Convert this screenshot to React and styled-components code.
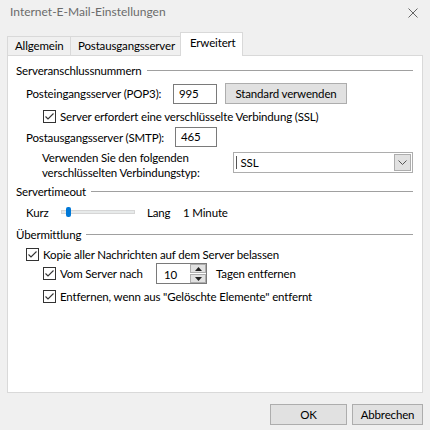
import React from 'react';
import styled, { createGlobalStyle } from 'styled-components';

/* ===== COLORS ===== */
const WINDOW_BG = '#F0F0F0';
const WHITE = '#FFFFFF';
const TEXT = '#000000';
const TITLE_TEXT = '#6B6B6B';
const BORDER = '#D9D9D9';
const INPUT_BORDER = '#7A7A7A';
const BUTTON_BG = '#E1E1E1';
const BUTTON_BORDER = '#ADADAD';
const GROUP_LINE = '#A0A0A0';
const ACCENT = '#0078D7';

const GlobalStyle = createGlobalStyle`
  html, body {
    margin: 0;
    padding: 0;
    background: ${WINDOW_BG};
  }
  * { box-sizing: border-box; }
`;

/* ===== WINDOW ===== */

const Window = styled.div`
  width: 430px;
  height: 430px;
  background: ${WINDOW_BG};
  font-family: 'Segoe UI', Lato, 'Noto Sans', sans-serif;
  font-size: 11.5px;
  letter-spacing: -0.15px;
  color: ${TEXT};
  display: flex;
  flex-direction: column;
  overflow: hidden;
`;

const TitleBar = styled.div`
  height: 33px;
  display: flex;
  align-items: flex-start;
  justify-content: space-between;
  padding: 4px 12px 0 10px;
`;

const Title = styled.span`
  font-size: 12px;
  letter-spacing: 0;
  color: ${TITLE_TEXT};
`;

const CloseIcon = styled.svg`
  margin-top: 4px;
`;

/* ===== TABS ===== */

const TabStrip = styled.div`
  display: flex;
  align-items: flex-end;
  height: 23px;
  padding-left: 7px;
  position: relative;
  z-index: 1;
`;

const Tab = styled.div`
  height: ${(p) => (p.$active ? '24px' : '20px')};
  width: ${(p) => p.$w}px;
  margin: ${(p) => (p.$active ? '0 -2px' : '0')};
  padding-left: ${(p) => (p.$active ? '9px' : '7px')};
  padding-top: ${(p) => (p.$active ? '3px' : '2px')};
  background: ${(p) => (p.$active ? WHITE : WINDOW_BG)};
  border: 1px solid ${BORDER};
  border-bottom: ${(p) => (p.$active ? 'none' : `1px solid ${BORDER}`)};
  border-right: ${(p) => (p.$last || p.$active ? `1px solid ${BORDER}` : 'none')};
  white-space: nowrap;
`;

const Panel = styled.div`
  margin: -1px 7px 0 7px;
  height: 338px;
  background: ${WHITE};
  border: 1px solid ${BORDER};
  padding: 6px 9px 0 8px;
  display: flex;
  flex-direction: column;
`;

/* ===== GROUPS ===== */

const GroupHeader = styled.div`
  height: 16px;
  margin-top: ${(p) => p.$mt || 0}px;
  display: flex;
  align-items: center;
  gap: 5px;
  &::after {
    content: '';
    flex: 1;
    border-top: 1px solid ${GROUP_LINE};
  }
`;

const Row = styled.div`
  display: flex;
  align-items: ${(p) => p.$align || 'center'};
  height: ${(p) => p.$h || 20}px;
  margin-top: ${(p) => p.$mt || 0}px;
  padding-left: ${(p) => p.$indent || 0}px;
  white-space: nowrap;
`;

const Label = styled.span`
  width: ${(p) => (p.$w ? `${p.$w}px` : 'auto')};
  margin-left: ${(p) => p.$ml || 0}px;
  flex-shrink: 0;
`;

const TextInput = styled.div`
  width: ${(p) => p.$w}px;
  height: 20px;
  border: 1px solid ${INPUT_BORDER};
  background: ${WHITE};
  padding: 2px 0 0 5px;
  margin-left: ${(p) => p.$ml || 0}px;
`;

const Button = styled.div`
  height: ${(p) => p.$h || 21}px;
  width: ${(p) => p.$w}px;
  margin-left: ${(p) => p.$ml || 0}px;
  background: ${BUTTON_BG};
  border: 1px solid ${BUTTON_BORDER};
  display: flex;
  align-items: center;
  justify-content: center;
`;

const TwoLineLabel = styled.div`
  width: 192px;
  margin-left: 26px;
  line-height: 15px;
  white-space: normal;
`;

const Select = styled.div`
  width: 180px;
  height: 21px;
  margin-top: 2px;
  border: 1px solid ${BUTTON_BORDER};
  background: ${WHITE};
  display: flex;
  align-items: center;
`;

const SelectValue = styled.span`
  flex: 1;
  padding-left: 3px;
  border-left: 1px solid #555;
  margin-left: 2px;
  line-height: 13px;
`;

const SelectArrow = styled.div`
  width: 17px;
  height: 17px;
  margin-right: 1px;
  background: ${BUTTON_BG};
  border: 1px solid ${BUTTON_BORDER};
  display: flex;
  align-items: center;
  justify-content: center;
`;

/* ===== CHECKBOX ===== */

const CheckBox = styled.div`
  width: 13px;
  height: 13px;
  border: 1px solid #333333;
  background: ${WHITE};
  margin-right: 4px;
  display: flex;
  align-items: center;
  justify-content: center;
  flex-shrink: 0;
`;

const Checked = () => (
  <CheckBox>
    <svg width="11" height="11" viewBox="0 0 11 11">
      <polyline points="1.5,5.5 4,8 9.5,2.5" fill="none" stroke="#333" strokeWidth="1.1" />
    </svg>
  </CheckBox>
);

/* ===== SLIDER ===== */

const SliderTrack = styled.div`
  position: relative;
  width: 74px;
  height: 4px;
  margin-left: 10px;
  background: #E7EAEA;
  border: 1px solid #D6D6D6;
`;

const SliderThumb = styled.div`
  position: absolute;
  left: 4px;
  top: -4px;
  width: 5px;
  height: 10px;
  border-radius: 2px;
  background: ${ACCENT};
`;

/* ===== SPINNER ===== */

const Spinner = styled.div`
  width: 51px;
  height: 21px;
  border: 1px solid ${INPUT_BORDER};
  background: ${WHITE};
  display: flex;
  align-items: center;
`;

const SpinValue = styled.span`
  flex: 1;
  padding: 2px 0 0 7px;
`;

const SpinButtons = styled.div`
  width: 16px;
  height: 19px;
  display: flex;
  flex-direction: column;
  gap: 1px;
`;

const SpinButton = styled.div`
  flex: 1;
  background: ${BUTTON_BG};
  border: 1px solid ${BUTTON_BORDER};
  display: flex;
  align-items: center;
  justify-content: center;
`;

/* ===== FOOTER ===== */

const Footer = styled.div`
  display: flex;
  justify-content: flex-end;
  gap: 5px;
  padding: 11px 7px 0 0;
`;

const App = () => {
  return (
    <>
      <GlobalStyle />
      <Window>
        <TitleBar>
          <Title>Internet-E-Mail-Einstellungen</Title>
          <CloseIcon width="10" height="10" viewBox="0 0 10 10">
            <path d="M0.5 0.5 L9.5 9.5 M9.5 0.5 L0.5 9.5" stroke="#555" strokeWidth="0.9" />
          </CloseIcon>
        </TitleBar>

        <TabStrip>
          <Tab $w={63}>Allgemein</Tab>
          <Tab $w={112} $last>Postausgangsserver</Tab>
          <Tab $w={63} $active>Erweitert</Tab>
        </TabStrip>

        <Panel>
          <GroupHeader>Serveranschlussnummern</GroupHeader>
          <Row $h={21} $mt={5} $indent={10}>
            <Label $w={147}>Posteingangsserver (POP3):</Label>
            <TextInput $w={44}>995</TextInput>
            <Button $w={122} $ml={8}>Standard verwenden</Button>
          </Row>
          <Row $mt={2} $indent={27}>
            <Checked />
            <Label>Server erfordert eine verschlüsselte Verbindung (SSL)</Label>
          </Row>
          <Row $mt={1} $indent={10}>
            <Label $w={149}>Postausgangsserver (SMTP):</Label>
            <TextInput $w={42}>465</TextInput>
          </Row>
          <Row $h={30} $mt={3} $align="flex-start">
            <TwoLineLabel>
              Verwenden Sie den folgenden verschlüsselten Verbindungstyp:
            </TwoLineLabel>
            <Select>
              <SelectValue>SSL</SelectValue>
              <SelectArrow>
                <svg width="9" height="5" viewBox="0 0 9 5">
                  <polyline points="0.5,0.5 4.5,4.5 8.5,0.5" fill="none" stroke="#555" strokeWidth="1" />
                </svg>
              </SelectArrow>
            </Select>
          </Row>

          <GroupHeader $mt={3}>Servertimeout</GroupHeader>
          <Row $mt={3} $indent={10}>
            <Label $w={25}>Kurz</Label>
            <SliderTrack>
              <SliderThumb />
            </SliderTrack>
            <Label $w={36} $ml={12}>Lang</Label>
            <Label>1 Minute</Label>
          </Row>

          <GroupHeader $mt={4}>Übermittlung</GroupHeader>
          <Row $h={18} $mt={3} $indent={10}>
            <Checked />
            <Label>Kopie aller Nachrichten auf dem Server belassen</Label>
          </Row>
          <Row $h={21} $indent={27}>
            <Checked />
            <Label $w={96}>Vom Server nach</Label>
            <Spinner>
              <SpinValue>10</SpinValue>
              <SpinButtons>
                <SpinButton>
                  <svg width="7" height="4" viewBox="0 0 7 4"><polygon points="3.5,0 7,4 0,4" fill="#222" /></svg>
                </SpinButton>
                <SpinButton>
                  <svg width="7" height="4" viewBox="0 0 7 4"><polygon points="0,0 7,0 3.5,4" fill="#222" /></svg>
                </SpinButton>
              </SpinButtons>
            </Spinner>
            <Label $ml={9}>Tagen entfernen</Label>
          </Row>
          <Row $mt={2} $indent={27}>
            <Checked />
            <Label>Entfernen, wenn aus "Gelöschte Elemente" entfernt</Label>
          </Row>
        </Panel>

        <Footer>
          <Button $w={77} $h={21}>OK</Button>
          <Button $w={71} $h={21}>Abbrechen</Button>
        </Footer>
      </Window>
    </>
  );
};

export default App;
